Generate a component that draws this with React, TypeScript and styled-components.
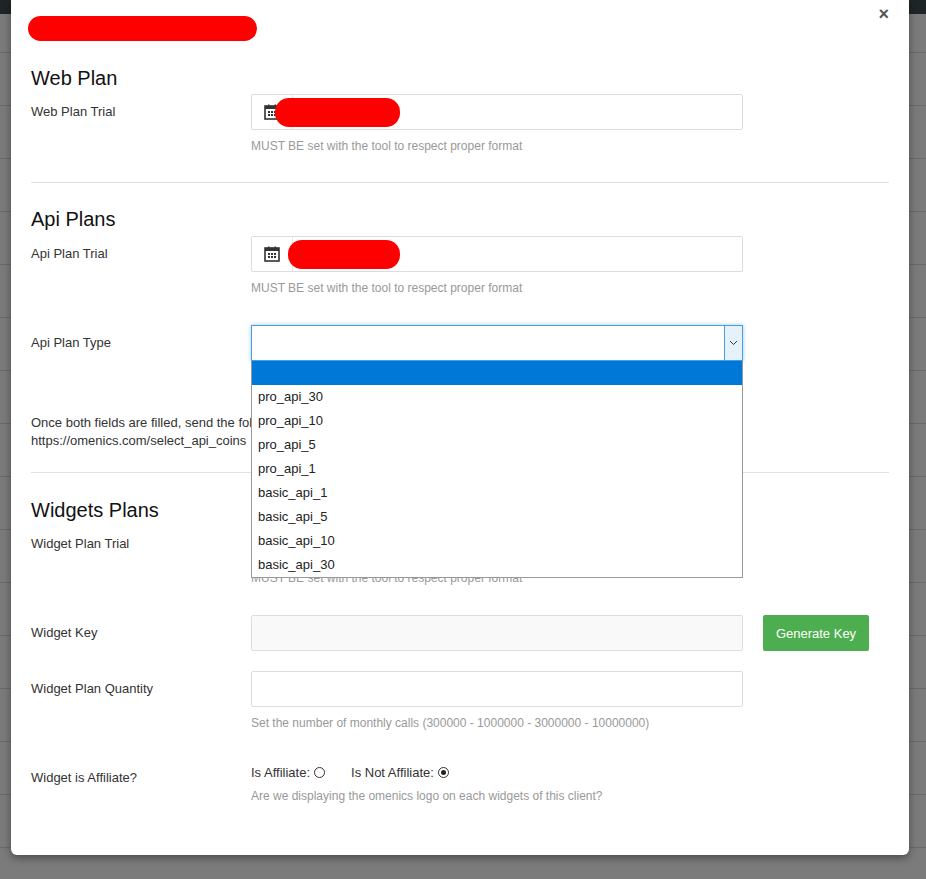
import React from 'react'
import styled, { createGlobalStyle } from 'styled-components'

const Global = createGlobalStyle`
  body {
    margin: 0;
    background: #7b7b7b;
    font-family: "Liberation Sans", Arial, sans-serif;
    font-size: 13px;
    color: #333;
  }
`;

const Page = styled.div`
  position: relative;
  height: 879px;
  overflow: hidden;
  background:
    linear-gradient(#1f2427, #1f2427) top / 100% 14px no-repeat,
    repeating-linear-gradient(#7b7b7b 0 52px, #6a6a6a 52px 53px);
`;

const Modal = styled.div`
  margin-left: 11px;
  width: 898px;
  height: 855px;
  background: #fff;
  border-radius: 0 0 6px 6px;
  box-shadow: 0 3px 9px rgba(0, 0, 0, 0.4);
  box-sizing: border-box;
  padding: 16px 20px 0 20px;
  position: relative;
`;

const Close = styled.div`
  position: absolute;
  right: 20px;
  top: 4px;
  font-size: 18px;
  font-weight: bold;
  color: #555;
`;

const Redact = styled.span<{ w: number; h: number }>`
  display: inline-block;
  width: ${p => p.w}px;
  height: ${p => p.h}px;
  background: #ff0000;
  border-radius: 14px;
`;

const TitleRow = styled.div`
  margin-left: -3px;
  height: 25px;
`;

const Heading = styled.h4<{ top: number }>`
  margin: ${p => p.top}px 0 0 0;
  font-size: 20px;
  font-weight: normal;
  color: #111;
  line-height: 24px;
`;

const Row = styled.div<{ top: number }>`
  display: grid;
  grid-template-columns: 200px 492px auto;
  column-gap: 20px;
  margin-top: ${p => p.top}px;
  position: relative;
`;

const Label = styled.div<{ pad?: number }>`
  padding-top: ${p => p.pad ?? 10}px;
  font-size: 13px;
  color: #333;
`;

const Field = styled.div`
  display: flex;
  flex-direction: column;
`;

const Group = styled.div`
  display: flex;
  height: 36px;
  border: 1px solid #ddd;
  border-radius: 2px;
  box-sizing: border-box;
  align-items: center;
`;

const Addon = styled.div`
  width: 40px;
  height: 100%;
  border-right: 1px solid #e6e6e6;
  display: flex;
  align-items: center;
  justify-content: center;
  flex-shrink: 0;
`;

const Input = styled.div<{ readonly?: boolean }>`
  height: 36px;
  border: 1px solid #ddd;
  border-radius: 2px;
  box-sizing: border-box;
  background: ${p => (p.readonly ? '#f9f9f9' : '#fff')};
`;

const Help = styled.div`
  margin-top: 9px;
  font-size: 12px;
  color: #999;
`;

const Select = styled.div`
  height: 36px;
  border: 1px solid #4a9be0;
  box-shadow: 0 0 4px rgba(60, 150, 230, 0.5);
  box-sizing: border-box;
  display: flex;
  justify-content: flex-end;
`;

const Chevron = styled.div`
  width: 17px;
  background: #e5f1fb;
  border-left: 1px solid #4a9be0;
  display: flex;
  align-items: center;
  justify-content: center;
`;

const List = styled.div`
  position: absolute;
  left: 220px;
  top: 36px;
  width: 492px;
  box-sizing: border-box;
  background: #fff;
  border: 1px solid #999;
  border-top: none;
  z-index: 5;
`;

const Option = styled.div<{ active?: boolean }>`
  height: 24px;
  line-height: 24px;
  padding-left: 6px;
  font-size: 13px;
  color: #222;
  background: ${p => (p.active ? '#0078d7' : '#fff')};
`;

const Note = styled.p`
  margin: 53px 0 0 0;
  line-height: 18px;
  color: #333;
`;

const Divider = styled.hr<{ top: number }>`
  margin: ${p => p.top}px 0 0 0;
  border: none;
  border-top: 1px solid #e2e2e2;
`;

const GenButton = styled.button`
  width: 106px;
  height: 36px;
  background: #4cae4f;
  color: #fff;
  border: none;
  border-radius: 2px;
  font-family: inherit;
  font-size: 13px;
`;

const Radios = styled.div`
  display: flex;
  gap: 26px;
  align-items: center;
  height: 16px;
`;

const RadioLabel = styled.span`
  display: flex;
  align-items: center;
  gap: 4px;
`;

const Dot = styled.span<{ on?: boolean }>`
  width: 11px;
  height: 11px;
  border: 1px solid #333;
  border-radius: 50%;
  box-sizing: border-box;
  display: inline-flex;
  align-items: center;
  justify-content: center;
  &::after {
    content: '';
    width: 5px;
    height: 5px;
    border-radius: 50%;
    background: ${p => (p.on ? '#222' : 'transparent')};
  }
`;

const Calendar = () => (
  <svg width="16" height="16" viewBox="0 0 16 16">
    <rect x="1" y="2" width="14" height="13" fill="none" stroke="#333" strokeWidth="1.6" />
    <rect x="1" y="2" width="14" height="3" fill="#333" />
    <rect x="4" y="0.5" width="1.5" height="3" fill="#333" />
    <rect x="10.5" y="0.5" width="1.5" height="3" fill="#333" />
    {[4, 7, 10].map(x => [7, 10].map(y => <rect key={x + '-' + y} x={x} y={y} width="2" height="2" fill="#333" />))}
  </svg>
);

const DateField = ({ redactW, offset }: { redactW: number; offset: number }) => (
  <Group>
    <Addon><Calendar /></Addon>
    <Redact w={redactW} h={29} style={{ marginLeft: offset }} />
  </Group>
);

const options = ['pro_api_30', 'pro_api_10', 'pro_api_5', 'pro_api_1', 'basic_api_1', 'basic_api_5', 'basic_api_10', 'basic_api_30'];

export default function App() {
  return (
    <Page>
      <Global />
      <Modal>
        <Close>×</Close>
        <TitleRow><Redact w={229} h={25} /></TitleRow>

        <Heading top={25}>Web Plan</Heading>
        <Row top={4}>
          <Label>Web Plan Trial</Label>
          <Field>
            <DateField redactW={125} offset={-18} />
            <Help>MUST BE set with the tool to respect proper format</Help>
          </Field>
        </Row>
        <Divider top={29} />

        <Heading top={24}>Api Plans</Heading>
        <Row top={5}>
          <Label>Api Plan Trial</Label>
          <Field>
            <DateField redactW={112} offset={-5} />
            <Help>MUST BE set with the tool to respect proper format</Help>
          </Field>
        </Row>
        <Row top={30}>
          <Label>Api Plan Type</Label>
          <Select>
            <Chevron>
              <svg width="9" height="6" viewBox="0 0 9 6"><path d="M1 1l3.5 3.5L8 1" fill="none" stroke="#333" strokeWidth="1" /></svg>
            </Chevron>
          </Select>
          <List>
            <Option active>&nbsp;</Option>
            {options.map(o => <Option key={o}>{o}</Option>)}
          </List>
        </Row>
        <Note>
          Once both fields are filled, send the following link to the client:<br />
          https://omenics.com/select_api_coins
        </Note>
        <Divider top={22} />

        <Heading top={25}>Widgets Plans</Heading>
        <Row top={4}>
          <Label>Widget Plan Trial</Label>
          <Field>
            <Group />
            <Help>MUST BE set with the tool to respect proper format</Help>
          </Field>
        </Row>
        <Row top={30}>
          <Label>Widget Key</Label>
          <Input readonly />
          <div><GenButton>Generate Key</GenButton></div>
        </Row>
        <Row top={20}>
          <Label>Widget Plan Quantity</Label>
          <Field>
            <Input />
            <Help>Set the number of monthly calls (300000 - 1000000 - 3000000 - 10000000)</Help>
          </Field>
        </Row>
        <Row top={34}>
          <Label pad={6}>Widget is Affiliate?</Label>
          <Field>
            <Radios>
              <RadioLabel>Is Affiliate: <Dot /></RadioLabel>
              <RadioLabel>Is Not Affiliate: <Dot on /></RadioLabel>
            </Radios>
            <Help>Are we displaying the omenics logo on each widgets of this client?</Help>
          </Field>
        </Row>
      </Modal>
    </Page>
  );
}
